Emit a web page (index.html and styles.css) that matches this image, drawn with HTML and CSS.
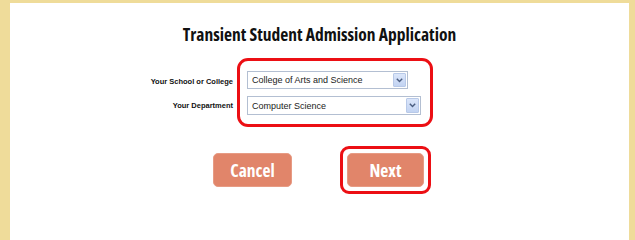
FILE: index.html
```html
<!DOCTYPE html>
<html lang="en">
<head>
<meta charset="utf-8">
<title>Transient Student Admission Application</title>
<link rel="stylesheet" href="styles.css">
</head>
<body>
<div class="panel">
  <h1 class="title">Transient Student Admission Application</h1>
  <div class="form-row">
    <div class="labels">
      <div class="label label-1">Your School or College</div>
      <div class="label label-2">Your Department</div>
    </div>
    <div class="highlight-box">
      <div class="select select-1">
        <span class="select-text">College of Arts and Science</span>
        <span class="select-arrow"><svg width="7" height="5" viewBox="0 0 7 5"><path d="M0.8 0.8 L3.5 3.6 L6.2 0.8" fill="none" stroke="#4a5d80" stroke-width="1.4"/></svg></span>
      </div>
      <div class="select select-2">
        <span class="select-text">Computer Science</span>
        <span class="select-arrow"><svg width="7" height="5" viewBox="0 0 7 5"><path d="M0.8 0.8 L3.5 3.6 L6.2 0.8" fill="none" stroke="#4a5d80" stroke-width="1.4"/></svg></span>
      </div>
    </div>
  </div>
  <div class="button-row">
    <button class="btn btn-cancel" type="button">Cancel</button>
    <div class="btn-outline">
      <button class="btn btn-next" type="button">Next</button>
    </div>
  </div>
</div>
</body>
</html>
```
FILE: styles.css
```css
html, body {
  margin: 0;
  padding: 0;
}
body {
  background: #efdc9a;
  width: 635px;
  min-height: 211px;
  font-family: "Liberation Sans", Arial, sans-serif;
}
.panel {
  margin: 0 6px 0 10px;
  border-top: 3px solid #efdc9a;
  min-height: calc(100vh - 3px);
  background: #ffffff;
  display: flex;
  flex-direction: column;
}
.title {
  margin: 21px 0 0 0;
  font-family: "Open Sans", "DejaVu Sans Condensed", sans-serif;
  font-stretch: 75%;
  font-weight: bold;
  font-size: 17.5px;
  line-height: 20px;
  color: #111111;
  text-align: center;
}
.form-row {
  display: flex;
  align-items: flex-start;
  margin: 14px 0 0 123px;
}
.labels {
  width: 100px;
  padding-top: 14px;
  display: flex;
  flex-direction: column;
  gap: 6px;
  margin-right: 4px;
}
.label {
  height: 18px;
  display: flex;
  align-items: center;
  justify-content: flex-end;
  font-weight: bold;
  font-size: 7.5px;
  color: #111111;
  white-space: nowrap;
}
.label-2 {
  height: 19px;
}
.highlight-box {
  width: 174px;
  border: 3px solid #ec0f14;
  border-radius: 11px;
  padding: 10px 9px 9px 7px;
  display: flex;
  flex-direction: column;
  gap: 7px;
}
.select {
  box-sizing: border-box;
  height: 18px;
  border: 1px solid #b3bfd2;
  background: #ffffff;
  display: flex;
  align-items: center;
  justify-content: space-between;
  padding: 1px 1px 1px 4px;
}
.select-1 {
  width: 161px;
}
.select-2 {
  width: 174px;
  height: 19px;
}
.select-text {
  font-size: 9px;
  color: #222222;
  white-space: nowrap;
}
.select-arrow {
  box-sizing: border-box;
  width: 13px;
  height: 100%;
  background: linear-gradient(#dbe6fa, #c2d3f2);
  border: 1px solid #b8c9e8;
  border-radius: 1px;
  display: flex;
  align-items: center;
  justify-content: center;
}
.select-arrow svg {
  display: block;
}
.button-row {
  display: flex;
  align-items: center;
  margin: 19px 0 0 203px;
  gap: 48px;
}
.btn {
  box-sizing: border-box;
  height: 34px;
  border: 1px solid #e79b84;
  border-radius: 5px;
  background: #e1856a;
  color: #ffffff;
  font-family: "Open Sans", "DejaVu Sans Condensed", sans-serif;
  font-stretch: 75%;
  font-weight: bold;
  font-size: 17.5px;
  padding: 0;
  cursor: pointer;
}
.btn-cancel {
  width: 79px;
}
.btn-next {
  width: 77px;
  display: block;
}
.btn-outline {
  border: 3px solid #ec0f14;
  border-radius: 9px;
  padding: 4px;
}
```
